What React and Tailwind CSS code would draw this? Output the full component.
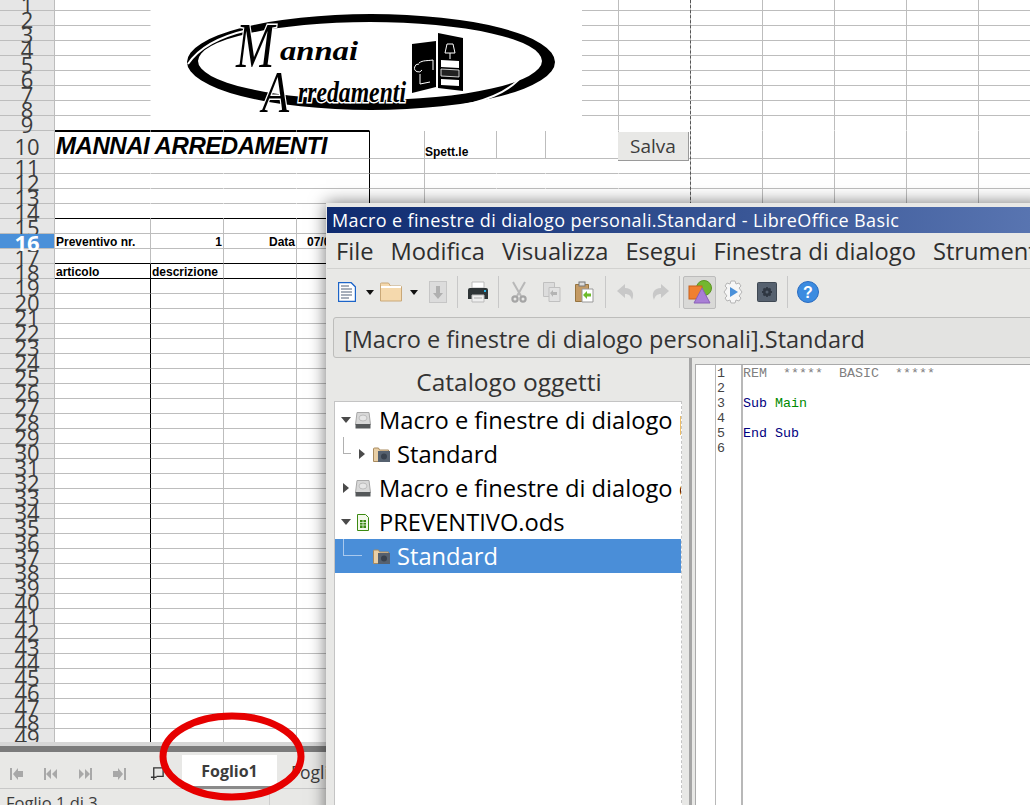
import React from 'react';

const ui = { fontFamily: '"Open Sans", "Noto Sans", sans-serif' };
const arial = { fontFamily: '"Liberation Sans", Arial, sans-serif' };
const mono = { fontFamily: '"Liberation Mono", monospace' };

const colCount = 14;
const rowNumbers = Array.from({ length: 49 }, (_, i) => i + 1);

const rowHeight = (r) => (r === 10 ? 'h-[28px]' : 'h-[15px]');

// borders of the sheet are irregular, merged ranges and the logo hide most of them
const cellBorder = (r, c) => {
  let right = 'border-r-[#bdbdbd]';
  let bottom = 'border-b-[#bdbdbd]';
  if (r >= 10 && r <= 14 && c <= 2) right = 'border-r-transparent';
  if (r >= 10 && r <= 14 && c === 3) right = 'border-r-black';
  if (r >= 11 && r <= 14 && (c === 5 || c === 6 || c === 7)) right = 'border-r-transparent';
  if (r <= 9 && c <= 7 && c !== 7) right = 'border-r-transparent';
  if (r === 10 && c === 4) right = 'border-r-[#bdbdbd]';
  if (r === 9 && c <= 3) bottom = 'border-b-black';
  if (r === 9 && c > 3) bottom = 'border-b-transparent';
  if ((r === 14 || r === 17 || r === 18) && c <= 3) bottom = 'border-b-black';
  if (r >= 18 && c === 0) right = 'border-r-black';
  return `${right} ${bottom}`;
};

const cellText = {
  '10-0': <span className="absolute left-[1px] top-[0px] whitespace-nowrap text-[24px] font-bold italic leading-[28px] tracking-[-0.45px] text-black">MANNAI ARREDAMENTI</span>,
  '10-5': <span className="absolute left-0 top-[14px] text-[12px] font-bold leading-[14px] text-black">Spett.le</span>,
  '16-0': <span className="absolute left-[1px] top-[1px] whitespace-nowrap text-[12px] font-bold leading-[15px] text-black">Preventivo nr.</span>,
  '16-1': <span className="absolute right-[1px] top-[1px] text-[12px] font-bold leading-[15px] text-black">1</span>,
  '16-2': <span className="absolute right-[1px] top-[1px] text-[12px] font-bold leading-[15px] text-black">Data</span>,
  '16-3': <span className="absolute left-[10px] top-[1px] text-[12px] font-bold leading-[15px] text-black">07/06/2019</span>,
  '18-0': <span className="absolute left-[1px] top-[1px] text-[12px] font-bold leading-[15px] text-black">articolo</span>,
  '18-1': <span className="absolute left-[1px] top-[1px] text-[12px] font-bold leading-[15px] text-black">descrizione</span>,
};

const Logo = () => (
  <svg viewBox="151 0 431 130" className="h-[130px] w-[431px]">
    <path
      fillRule="evenodd"
      fill="#000"
      d="M187 62a184 48 0 1 0 368 0a184 48 0 1 0-368 0ZM198 61a172 39 0 1 1 344 0a172 39 0 1 1-344 0Z"
    />
    <path d="M188 64C200 46 222 36 248 30" fill="none" stroke="#fff" strokeWidth="2" />
    <path d="M447 108C480 104 512 92 525 72" fill="none" stroke="#fff" strokeWidth="2" />
    <g fontFamily='"Liberation Serif", serif' fontStyle="italic" fill="#000" stroke="#fff" strokeWidth="3" style={{ paintOrder: 'stroke' }}>
      <text transform="translate(236 67) scale(0.72 1)" fontSize="64">M</text>
      <text x="280" y="60" fontSize="27" fontWeight="bold" textLength="78" lengthAdjust="spacingAndGlyphs">annai</text>
      <text transform="translate(262 112) scale(0.74 1)" fontSize="60">A</text>
      <text x="298" y="102" fontSize="29" fontWeight="bold" textLength="108" lengthAdjust="spacingAndGlyphs">rredamenti</text>
    </g>
    <path d="M412 44L436 41V87L412 93Z" fill="#000" />
    <path d="M438 33L463 38V91L438 88Z" fill="#000" />
    <path d="M419 63c4-3 8-2 14-3M419 64a4 4 0 1 0 3 6M420 74v10M433 60v10M420 84l10-2" fill="none" stroke="#fff" strokeWidth="1" />
    <path d="M447 44h6l2 9h-10ZM450 53v6" fill="none" stroke="#fff" strokeWidth="1" />
    <path d="M441 60l18 1v7l-18-1Z" fill="#fff" />
    <path d="M441 69l18 1v7l-18-1Z" fill="#222" stroke="#fff" strokeWidth="0.8" />
    <path d="M441 79l18 1v6l-18-1Z" fill="#fff" />
  </svg>
);

const RowHeader = ({ r }) => (
  <div className={`relative flex shrink-0 items-center justify-center border-b border-[#bdbdbd] pt-[2px] text-[22px] leading-none ${rowHeight(r)} ${r === 16 ? 'z-10 bg-[#4a90d9] font-bold text-white' : 'text-[#3c3c3c]'}`}>
    <span>{r}</span>
  </div>
);

const Sheet = () => (
  <div className="relative h-[742px] shrink-0 overflow-hidden">
    <div className="-mt-[4px] flex">
      <div className="w-[55px] shrink-0 border-r border-[#bdbdbd] bg-[#e6e6e6]" style={ui}>
        {rowNumbers.map((r) => <RowHeader key={r} r={r} />)}
      </div>
      <div className="flex-1" style={arial}>
        {rowNumbers.map((r) => (
          <div key={r} className={`grid grid-cols-[96px_73px_73px_73px_55px_72px_49px_73px_72px_72px_72px_72px_72px_72px] ${rowHeight(r)}`}>
            {Array.from({ length: colCount }, (_, c) => (
              <div key={c} className={`relative border-r border-b ${cellBorder(r, c)} ${r === 10 && c <= 3 ? 'border-t border-t-black' : ''}`}>
                {cellText[`${r}-${c}`]}
              </div>
            ))}
          </div>
        ))}
      </div>
    </div>
    <div className="absolute left-[151px] top-0 bg-white"><Logo /></div>
    <div className="absolute left-[690px] top-0 h-[210px] border-l border-dashed border-[#555]" />
    <button className="absolute left-[618px] top-[132px] flex h-[29px] w-[71px] items-center justify-center border-r border-b border-[#9a9a9a] bg-[#e8e8e6] text-[19px] text-[#3c3c3c]" style={ui}>
      Salva
    </button>
  </div>
);

const NavArrow = ({ d }) => (
  <svg viewBox="0 0 16 12" className="h-[12px] w-[16px]" fill="#a8a8a8"><path d={d} /></svg>
);

const TabBar = () => (
  <>
    <div className="h-[4px] shrink-0 bg-[#d6d6d6]" />
    <div className="h-[6px] shrink-0 bg-[#7b7b7b]" />
    <div className="flex h-[37px] shrink-0 items-start border-b border-[#c8c8c8] bg-[#e8e8e6]" style={ui}>
      <div className="flex w-[182px] items-center pt-[14px]">
        <div className="ml-[9px]"><NavArrow d="M1 0h2v12H1ZM14 3v6H9v3L4 6l5-6v3Z" /></div>
        <div className="ml-[17px]"><NavArrow d="M2 0h2v12H2ZM9 1v10L4 6ZM15 1v10L10 6Z" /></div>
        <div className="ml-[20px]"><NavArrow d="M12 0h2v12h-2ZM7 1v10l5-5ZM1 1v10l5-5Z" /></div>
        <div className="ml-[17px]"><NavArrow d="M13 0h2v12h-2ZM2 3v6h5v3l5-6-5-6v3Z" /></div>
        <svg viewBox="0 0 16 16" className="ml-[23px] h-[15px] w-[15px]" fill="none" stroke="#333" strokeWidth="1.4">
          <path d="M4 10V2h10v9H7M1 12h6M4 9v6" />
        </svg>
      </div>
      <div className="mt-[3px] flex h-[34px] w-[95px] items-center justify-center border-b-[3px] border-[#8a8a8a] bg-white pt-[1px] text-[16px] font-bold text-[#3c3c3c]">
        Foglio1
      </div>
      <div className="ml-[14px] pt-[7px] text-[17.500px] text-[#3c3c3c]">Foglio2</div>
    </div>
    <div className="flex flex-1 bg-[#e8e8e6]" style={ui}>
      <div className="w-[270px] border-r border-[#cfcfcf] pl-[6px] pt-[3px] text-[16.500px] leading-[22px] text-[#3c3c3c]">Foglio 1 di 3</div>
    </div>
  </>
);

const DocIcon = () => (
  <svg viewBox="0 0 18 20" className="h-[20px] w-[18px]">
    <path d="M.5.5H13L17.5 5v14.500H.5Z" fill="#fff" stroke="#1c64c8" strokeWidth="1.4" />
    <path d="M3 4h8M3 7h11M3 10h11M3 13h11M3 16h8" stroke="#8a95a5" strokeWidth="1.3" />
  </svg>
);
const Caret = () => <svg viewBox="0 0 8 5" className="h-[5px] w-[8px]"><path d="M0 0h8L4 5Z" fill="#111" /></svg>;
const FolderIcon = () => (
  <svg viewBox="0 0 22 20" className="h-[20px] w-[22px]">
    <path d="M.5 2.500A1 1 0 0 1 1.500 1h7l2 3h10a1 1 0 0 1 1 1v14H.5Z" fill="#f5d9ad" stroke="#c9a878" />
    <path d="M1 4h20v2H1Z" fill="#fff" />
  </svg>
);
const SaveIcon = () => (
  <svg viewBox="0 0 18 22" className="h-[22px] w-[18px]">
    <rect x=".5" y=".5" width="17" height="21" fill="#dcdcdc" stroke="#c6c6c6" />
    <path d="M7 5h4v7h3l-5 6-5-6h3Z" fill="#b0b0b0" />
  </svg>
);
const PrintIcon = () => (
  <svg viewBox="0 0 22 22" className="h-[22px] w-[22px]">
    <path d="M5 1h12v6H5Z" fill="#fff" stroke="#bbb" />
    <path d="M1 9a2 2 0 0 1 2-2h16a2 2 0 0 1 2 2v9H1Z" fill="#2e3436" />
    <rect x="17" y="9" width="2" height="2" fill="#29b6e8" />
    <path d="M5 14h12v7H5Z" fill="#eee" stroke="#bbb" />
    <path d="M7 17h8" stroke="#aaa" />
  </svg>
);
const CutIcon = () => (
  <svg viewBox="0 0 16 22" className="h-[22px] w-[16px]" fill="none" stroke="#b8b8b8" strokeWidth="2">
    <path d="M2 1l8 14M14 1L6 15" />
    <circle cx="4" cy="18" r="2.600" stroke="#a5a5a5" strokeWidth="2.200" />
    <circle cx="12" cy="18" r="2.600" stroke="#a5a5a5" strokeWidth="2.200" />
  </svg>
);
const CopyIcon = () => (
  <svg viewBox="0 0 18 20" className="h-[20px] w-[18px]">
    <path d="M.5.5h11v14H.5Z" fill="#dcdcdc" stroke="#c0c0c0" />
    <path d="M6 5.500h11v14H6Z" fill="#e2e2e2" stroke="#c0c0c0" />
    <path d="M7 11l3-3v2h4v3h-4v2Z" fill="#b4b4b4" />
  </svg>
);
const PasteIcon = () => (
  <svg viewBox="0 0 19 22" className="h-[22px] w-[19px]">
    <path d="M.5 3.500h13v17H.5Z" fill="#c49a63" stroke="#96743f" />
    <rect x="4" y="1" width="6" height="4" fill="#ddd" stroke="#777" />
    <path d="M7 8h11v13H7Z" fill="#fff" stroke="#999" />
    <path d="M8 14l4-4v2.500h4v3h-4V18Z" fill="#6dbb2a" />
  </svg>
);
const UndoIcon = ({ flip }) => (
  <svg viewBox="0 0 20 20" className={`h-[20px] w-[20px] ${flip ? '-scale-x-100' : ''}`}>
    <path d="M9 2L1 9l8 7v-4c4 0 6 2 7 6 3-7 0-12-7-12Z" fill="#c8c8c8" />
  </svg>
);
const ShapesIcon = () => (
  <svg viewBox="0 0 24 24" className="h-[24px] w-[24px]">
    <circle cx="16" cy="8" r="7.500" fill="#73b72f" stroke="#5b9424" />
    <rect x="1" y="6" width="13" height="13" fill="#f08030" stroke="#c8601c" />
    <path d="M14 8l8 15H6Z" fill="#a97fd6" stroke="#8a62b8" />
  </svg>
);
const RunIcon = () => (
  <svg viewBox="0 0 22 24" className="h-[24px] w-[22px]">
    <path d="M9 1h4l1 3 3-1 2 3-2 2 3 4-3 4 2 2-2 3-3-1-1 3H9l-1-3-3 1-2-3 2-2-3-4 3-4-2-2 2-3 3 1Z" fill="#f6f6f6" stroke="#b5b5b5" />
    <path d="M8 7l8 5-8 5Z" fill="#4a90d9" />
  </svg>
);
const GearBox = () => (
  <svg viewBox="0 0 20 20" className="h-[20px] w-[20px]">
    <rect x=".5" y=".5" width="19" height="19" rx="1" fill="#56616f" stroke="#3f4853" />
    <circle cx="10" cy="10" r="4" fill="#2f3742" />
    <path d="M10 5v10M5 10h10M6.500 6.500l7 7M13.500 6.500l-7 7" stroke="#2f3742" strokeWidth="1.800" />
    <circle cx="10" cy="10" r="1.500" fill="#56616f" />
  </svg>
);
const HelpIcon = () => (
  <svg viewBox="0 0 22 22" className="h-[22px] w-[22px]">
    <circle cx="11" cy="11" r="10.500" fill="#3b8be0" stroke="#2a6cc0" />
    <text x="11" y="17" textAnchor="middle" fontSize="16" fontWeight="bold" fill="#fff" fontFamily='"Liberation Sans", sans-serif'>?</text>
  </svg>
);
const Sep = () => <div className="h-[32px] w-px bg-[#c8c8c8]" />;

const Toolbar = () => (
  <div className="flex h-[43px] shrink-0 items-center pl-[11px] pt-[3px]">
    <DocIcon />
    <div className="ml-[10px]"><Caret /></div>
    <div className="ml-[6px]"><FolderIcon /></div>
    <div className="ml-[8px]"><Caret /></div>
    <div className="ml-[11px]"><SaveIcon /></div>
    <div className="ml-[10px]"><Sep /></div>
    <div className="ml-[9px]"><PrintIcon /></div>
    <div className="ml-[9px]"><Sep /></div>
    <div className="ml-[12px]"><CutIcon /></div>
    <div className="ml-[16px]"><CopyIcon /></div>
    <div className="ml-[14px]"><PasteIcon /></div>
    <div className="ml-[11px]"><Sep /></div>
    <div className="ml-[10px]"><UndoIcon /></div>
    <div className="ml-[14px]"><UndoIcon flip /></div>
    <div className="ml-[9px]"><Sep /></div>
    <div className="ml-[3px] flex h-[33px] w-[33px] items-center justify-center rounded-[2px] border border-[#bcbcbc] bg-[#d9d9d7]"><ShapesIcon /></div>
    <div className="ml-[6px]"><RunIcon /></div>
    <div className="ml-[13px]"><GearBox /></div>
    <div className="ml-[10px]"><Sep /></div>
    <div className="ml-[9px]"><HelpIcon /></div>
  </div>
);

const DriveIcon = () => (
  <svg viewBox="0 0 16 17" className="h-[17px] w-[16px]">
    <path d="M2 .5h12l1.500 12H.5Z" fill="#d8d8d8" stroke="#a8a8a8" />
    <ellipse cx="8" cy="6" rx="4" ry="3" fill="#e6e6e6" stroke="#bdbdbd" />
    <path d="M.5 12h15v4.500H.5Z" fill="#55585a" />
  </svg>
);
const LibIcon = () => (
  <svg viewBox="0 0 17 15" className="h-[15px] w-[17px]">
    <path d="M.5 2a1 1 0 0 1 1-1h4l1 2h9v11.500H.5Z" fill="#e9cfa6" stroke="#a88a5e" />
    <rect x="5" y="4" width="12" height="11" fill="#56616f" />
    <circle cx="11" cy="9.500" r="3" fill="#39424e" />
  </svg>
);
const CalcIcon = () => (
  <svg viewBox="0 0 12 17" className="h-[17px] w-[12px]">
    <path d="M.5.5h8l3 3v13H.5Z" fill="#f4f9ec" stroke="#3c8a12" />
    <path d="M3 6h6v8H3Z" fill="#3c8a12" />
    <path d="M3 8.500h6M3 11h6M6 6v8" stroke="#fff" strokeWidth=".7" />
  </svg>
);
const TreeArrow = ({ open }) => (
  <svg viewBox="0 0 10 10" className="h-[10px] w-[10px]">
    <path d={open ? 'M0 2h10L5 8Z' : 'M2 0l6 5-6 5Z'} fill="#4a4a4a" />
  </svg>
);

const treeRows = [
  { text: 'Macro e finestre di dialogo personali', icon: <DriveIcon />, arrow: 'open' },
  { text: 'Standard', icon: <LibIcon />, arrow: 'closed', child: true },
  { text: 'Macro e finestre di dialogo dell\'applicazione', icon: <DriveIcon />, arrow: 'closed' },
  { text: 'PREVENTIVO.ods', icon: <CalcIcon />, arrow: 'open' },
  { text: 'Standard', icon: <LibIcon />, child: true, selected: true },
];

const TreeRow = ({ row }) => (
  <div className={`relative flex h-[34px] items-center whitespace-nowrap text-[23.700px] ${row.selected ? 'bg-[#4a8ed8] text-white' : 'text-black'} ${row.child ? 'pl-[22px]' : 'pl-[6px]'}`}>
    {row.child && (
      <div className={`absolute left-[8px] top-0 h-[17px] border-b border-l ${row.selected ? 'w-[19px] border-[#a9c9ee]' : 'w-[8px] border-[#b0b0b0]'}`} />
    )}
    <div className="flex h-[10px] w-[10px] shrink-0 items-center justify-center">
      {row.arrow && <TreeArrow open={row.arrow === 'open'} />}
    </div>
    <div className={`flex shrink-0 items-center justify-center ${row.child ? 'ml-[6px] w-[17px]' : 'ml-[4px] w-[16px]'}`}>{row.icon}</div>
    <span className={`pt-[2px] ${row.child ? 'ml-[7px]' : 'ml-[8px]'}`}>{row.text}</span>
  </div>
);

const codeLines = [
  <span className="text-[#808080]">{'REM  *****  BASIC  *****'}</span>,
  '',
  <><span className="text-[#000080]">Sub</span> <span className="text-[#008a00]">Main</span></>,
  '',
  <span className="text-[#000080]">End Sub</span>,
  '',
];

const BasicWindow = () => (
  <div className="absolute left-[326px] top-[203px] flex h-[620px] w-[720px] flex-col bg-[#e8e8e6] pl-[1px] pt-[4px] shadow-[0_0_16px_rgba(0,0,0,0.55)]" style={ui}>
    <div className="flex h-[26px] shrink-0 items-center bg-gradient-to-r from-[#0e2a6f] to-[#5a76b2] pl-[5px] text-[18px] tracking-[0.38px] whitespace-nowrap text-white">
      Macro e finestre di dialogo personali.Standard - LibreOffice Basic
    </div>
    <div className="flex h-[36px] shrink-0 items-center gap-[17px] border-b border-[#d2d2d0] pl-[9px] pt-[3px] text-[23.700px] whitespace-nowrap text-[#2e2e2e]">
      {['File', 'Modifica', 'Visualizza', 'Esegui', 'Finestra di dialogo', 'Strumenti'].map((m) => <span key={m}>{m}</span>)}
    </div>
    <Toolbar />
    <div className="mx-[6px] mt-[5px] flex h-[41px] shrink-0 items-center rounded-[3px] border border-[#bdbdbb] bg-[#e3e3e1] pl-[10px] pt-[4px] text-[23.500px] whitespace-nowrap text-[#333]">
      [Macro e finestre di dialogo personali].Standard
    </div>
    <div className="flex min-h-0 flex-1">
      <div className="flex w-[362px] shrink-0 flex-col">
        <div className="flex h-[43px] shrink-0 items-center justify-center pl-[2px] pt-[5px] text-[24.500px] text-[#333]">Catalogo oggetti</div>
        <div className="mx-[7px] flex-1 overflow-hidden border border-[#c4c4c4] bg-white pt-[1px] [border-right-style:dashed]">
          {treeRows.map((row, i) => <TreeRow key={i} row={row} />)}
        </div>
      </div>
      <div className="w-[3px] shrink-0 bg-[#a5a5a5]" />
      <div className="ml-[3px] mt-[6px] flex flex-1 border-l border-t border-[#aaaaaa] bg-white text-[13.330px] leading-[15px]" style={mono}>
        <div className="w-[19px] shrink-0" />
        <div className="w-[28px] shrink-0 border-l border-r-2 border-[#b8b8b8] pl-[1px] pt-[1px] text-[#444]">
          {codeLines.map((_, i) => <div key={i} className="h-[15px]">{i + 1}</div>)}
        </div>
        <div className="pt-[1px] whitespace-pre">
          {codeLines.map((line, i) => <div key={i} className="h-[15px]">{line}</div>)}
        </div>
      </div>
    </div>
  </div>
);

const App = () => (
  <div className="relative flex h-[805px] w-[1030px] flex-col overflow-hidden bg-white">
    <Sheet />
    <TabBar />
    <BasicWindow />
    <svg viewBox="0 0 146 89" className="absolute left-[159px] top-[712px] h-[89px] w-[146px]" fill="none">
      <ellipse cx="73" cy="44.500" rx="69" ry="40.500" stroke="#e60000" strokeWidth="7" />
    </svg>
  </div>
);

export default App;
